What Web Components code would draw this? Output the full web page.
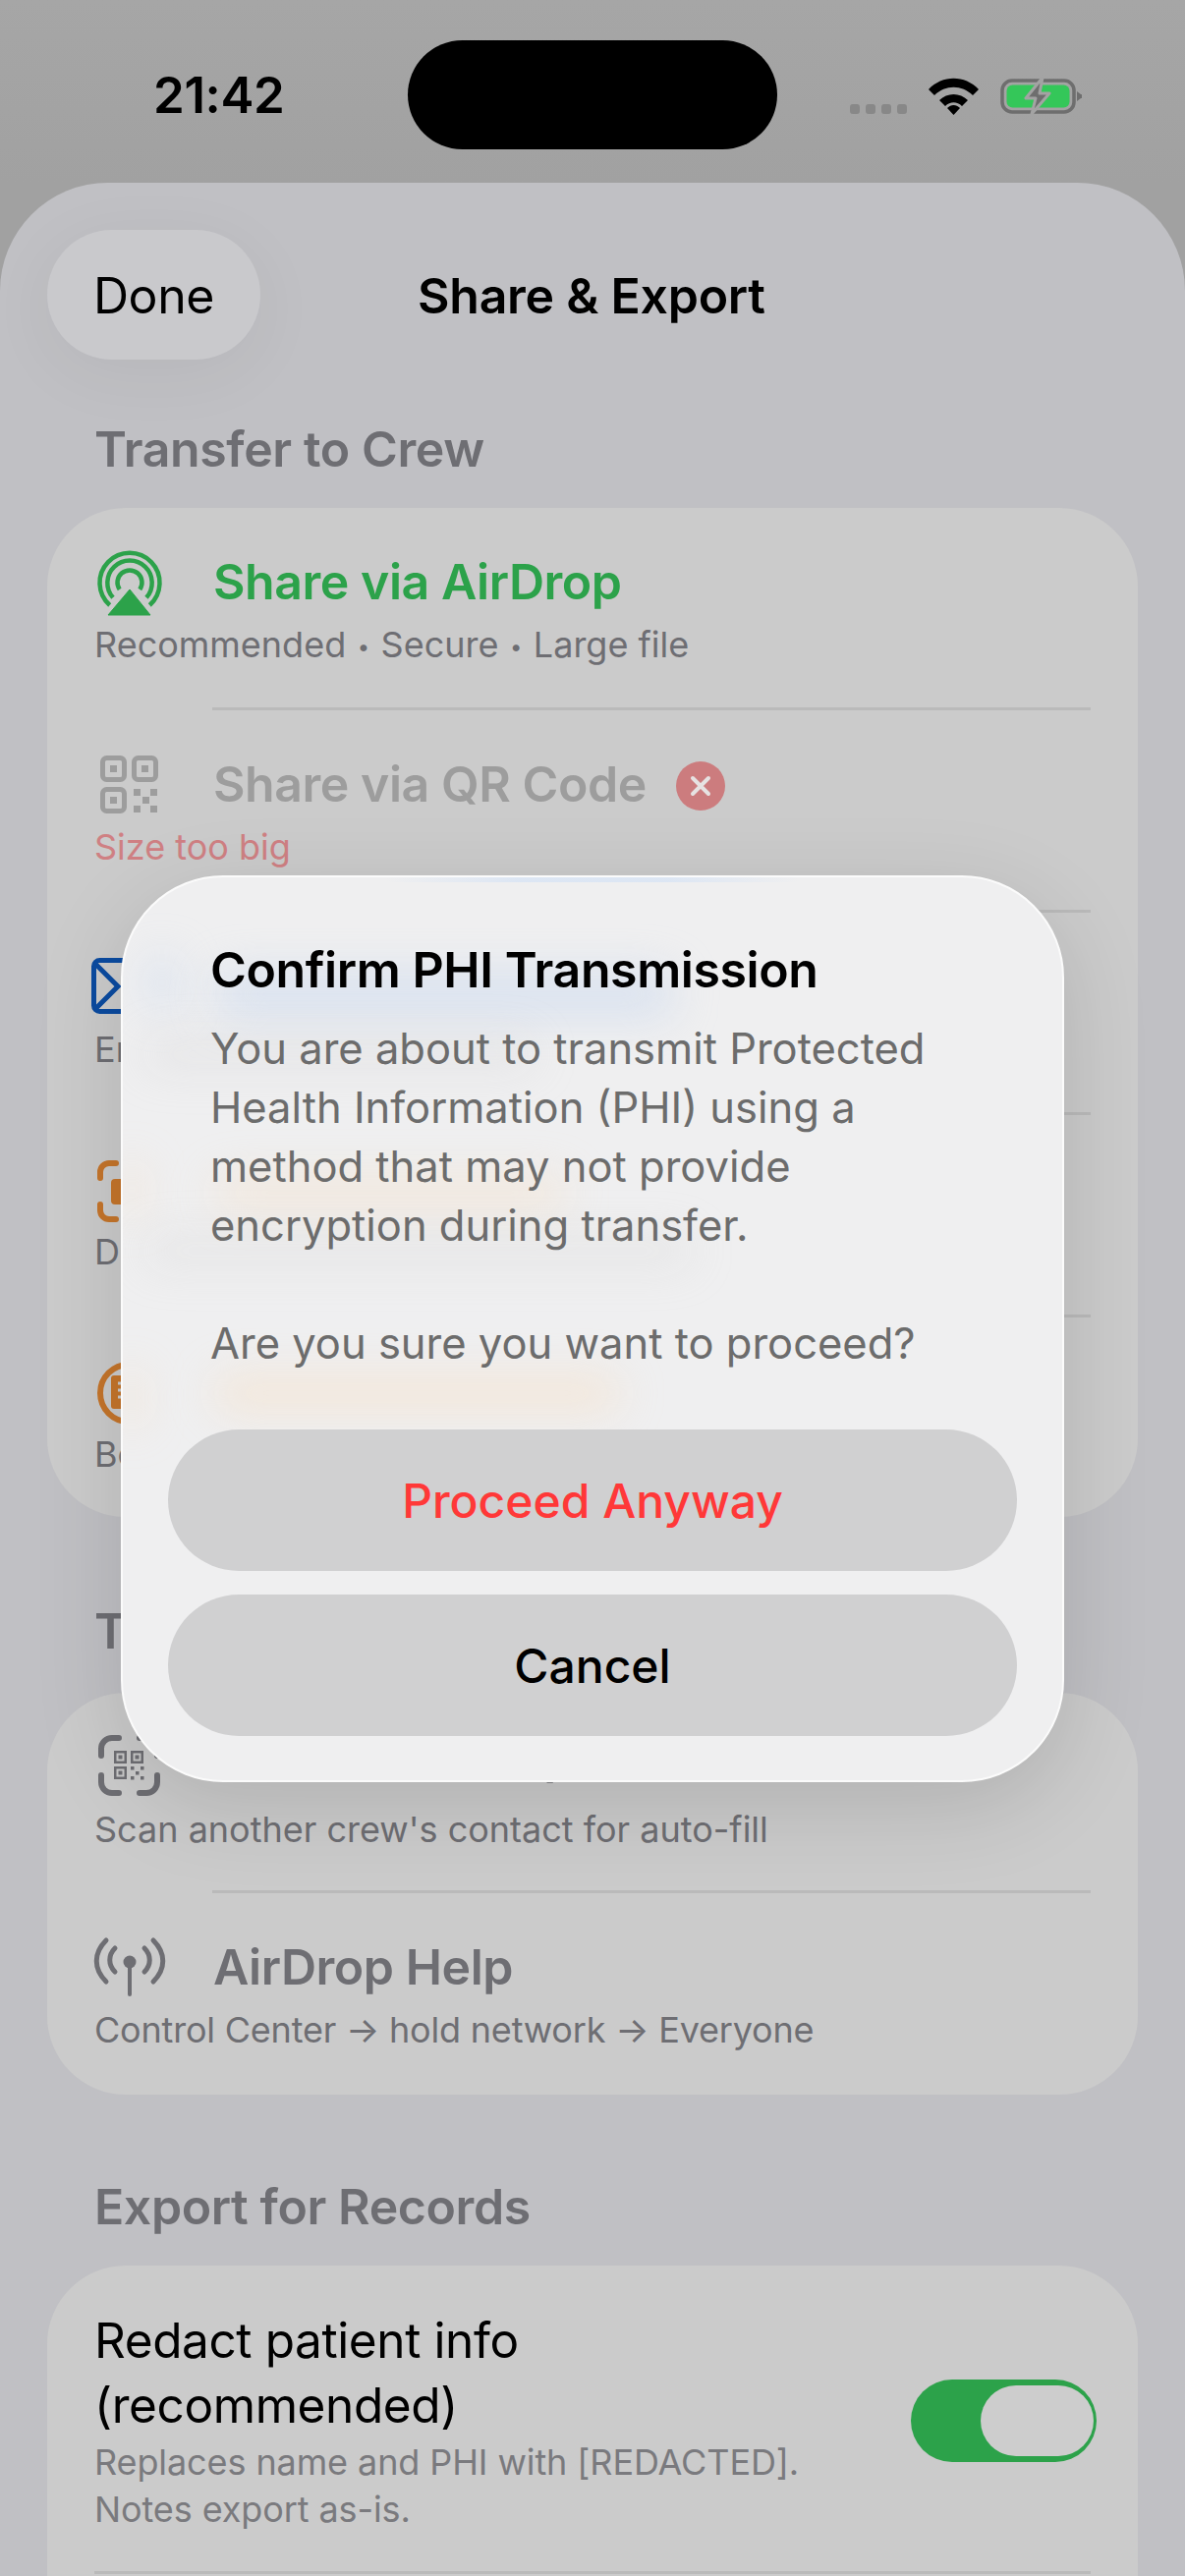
<!DOCTYPE html>
<html>
<head>
<meta charset="utf-8">
<title>Share &amp; Export</title>
<style>
  html, body { margin: 0; height: 100%; }
  body {
    width: 1206px;
    height: 2622px;
    overflow: hidden;
    position: relative;
    background: linear-gradient(#a6a6a6, #a1a1a1 186px);
    font-family: Inter, "Liberation Sans", sans-serif;
  }
</style>
</head>
<body>
  <status-bar></status-bar>

  <share-sheet heading="Share &amp; Export">
    <section-label>Transfer to Crew</section-label>
    <list-card>
      <share-row tone="green">
        <svg slot="icon" width="72" height="72" viewBox="0 0 72 72" fill="none" stroke="#2ca24a" stroke-width="4.5">
          <path d="M15.7 58A30.5 30.5 0 1 1 56.3 58"/>
          <path d="M19 50.3A22.7 22.7 0 1 1 53 50.3"/>
          <path d="M25.7 42A12.5 12.5 0 1 1 46.3 42"/>
          <path d="M36 42L57 68H14Z" fill="#2ca24a" stroke="#2ca24a" stroke-width="1" stroke-linejoin="round"/>
        </svg>
        <span slot="title">Share via AirDrop</span>
        <span slot="sub">Recommended<span style="font-size:22px;margin:0 11.5px;vertical-align:3px">•</span>Secure<span style="font-size:22px;margin:0 11.5px;vertical-align:3px">•</span>Large file</span>
      </share-row>
      <row-rule></row-rule>
      <share-row tone="off">
        <svg slot="icon" width="72" height="72" viewBox="0 0 72 72" fill="#9d9d9d">
          <g fill="none" stroke="#9d9d9d" stroke-width="5">
            <rect x="8.5" y="7.5" width="22" height="22" rx="4"/>
            <rect x="40.5" y="7.5" width="22" height="22" rx="4"/>
            <rect x="8.5" y="39.5" width="22" height="22" rx="4"/>
          </g>
          <rect x="16" y="15" width="7" height="7"/>
          <rect x="48" y="15" width="7" height="7"/>
          <rect x="16" y="47" width="7" height="7"/>
          <rect x="40" y="39" width="7" height="7"/>
          <rect x="57" y="39" width="7" height="7"/>
          <rect x="49" y="47" width="7" height="7"/>
          <rect x="40" y="56" width="7" height="7"/>
          <rect x="57" y="56" width="7" height="7"/>
        </svg>
        <span slot="title">Share via QR Code</span>
        <svg slot="badge" width="50" height="50" viewBox="0 0 50 50">
          <circle cx="25" cy="25" r="25" fill="#cc7c7e"/>
          <path d="M17 17L33 33M33 17L17 33" stroke="#e6e2e2" stroke-width="4" stroke-linecap="round"/>
        </svg>
        <span slot="sub" style="color:#cf8083">Size too big</span>
      </share-row>
      <row-rule></row-rule>
      <share-row>
        <svg slot="icon" width="72" height="72" viewBox="0 0 72 72" fill="none" stroke="#0b4ba0" stroke-width="5" style="overflow:visible">
          <rect x="-0.5" y="7.5" width="76" height="52" rx="6"/>
          <path d="M0 10L24 34L0 58M76 10L52 34L76 58"/>
        </svg>
        <span slot="sub">En</span>
      </share-row>
      <row-rule></row-rule>
      <share-row>
        <svg slot="icon" width="72" height="72" viewBox="0 0 72 72" fill="none" stroke="#c5752b" stroke-width="6" stroke-linecap="round" style="overflow:visible">
          <path d="M22 8H15A9 9 0 0 0 6 17V23M6 50V56A9 9 0 0 0 15 65H22M46 8H53A9 9 0 0 1 62 17V23M62 50V56A9 9 0 0 1 53 65H46"/>
          <rect x="17" y="24" width="34" height="26" rx="4" fill="#c5752b" stroke="none"/>
        </svg>
        <span slot="sub">D</span>
      </share-row>
      <row-rule></row-rule>
      <share-row>
        <svg slot="icon" width="72" height="72" viewBox="0 0 72 72" fill="none" stroke="#c5752b" stroke-width="6" style="overflow:visible">
          <circle cx="35" cy="36" r="29"/>
          <rect x="17" y="18" width="36" height="34" rx="3" fill="#c5752b" stroke="none"/>
          <path d="M24 26H46M24 33H46M24 40H46" stroke="#cbcbcb" stroke-width="3"/>
        </svg>
        <span slot="sub">Be</span>
      </share-row>
    </list-card>

    <section-label gap="86" under="33">T</section-label>
    <list-card>
      <share-row tone="muted" style="height:201px">
        <svg slot="icon" width="72" height="72" viewBox="0 0 72 72" fill="none" stroke="#6e6e73" stroke-width="6" stroke-linecap="round" style="overflow:visible">
          <path d="M25 5H18A11 11 0 0 0 7 16V23M7 43V50A11 11 0 0 0 18 61H25M46 61H53A11 11 0 0 0 64 50V43M64 23V16A11 11 0 0 0 53 5H46"/>
          <g fill="none" stroke-width="2.5" stroke-linecap="butt">
            <rect x="21.250" y="19.250" width="10.500" height="10.500"/>
            <rect x="38.250" y="19.250" width="10.500" height="10.500"/>
            <rect x="21.250" y="35.250" width="10.500" height="10.500"/>
          </g>
          <g fill="#6e6e73" stroke="none">
            <rect x="24.500" y="22.500" width="4" height="4"/>
            <rect x="41.500" y="22.500" width="4" height="4"/>
            <rect x="24.500" y="38.500" width="4" height="4"/>
            <rect x="37" y="34" width="3.500" height="3.500"/>
            <rect x="47" y="34" width="3.500" height="3.500"/>
            <rect x="42" y="39" width="3.500" height="3.500"/>
            <rect x="37" y="44" width="3.500" height="3.500"/>
            <rect x="47" y="44" width="3.500" height="3.500"/>
          </g>
        </svg>
        <span slot="title" style="margin-top:-8px">Scan Crew's QR</span>
        <span slot="sub">Scan another crew's contact for auto-fill</span>
      </share-row>
      <row-rule></row-rule>
      <share-row tone="muted" style="height:205px">
        <svg slot="icon" width="72" height="72" viewBox="0 0 72 72" fill="none" stroke="#6e6e73" stroke-width="5" stroke-linecap="round" style="overflow:visible">
          <circle cx="36" cy="29" r="6.500" fill="#6e6e73" stroke="none"/>
          <path d="M36 31V62" stroke-width="4"/>
          <path d="M21 15C14 22 14 32 21 39M51 15C58 22 58 32 51 39"/>
          <path d="M12 7C-1 20-1 36 12 49M60 7C73 20 73 36 60 49"/>
        </svg>
        <span slot="title">AirDrop Help</span>
        <span slot="sub" style="letter-spacing:-0.2px">Control Center → hold network → Everyone</span>
      </share-row>
    </list-card>

    <section-label gap="84" under="30">Export for Records</section-label>
    <list-card>
      <toggle-row>
        <span slot="title">Redact patient info<br>(recommended)</span>
        <span slot="sub">Replaces name and PHI with [REDACTED].<br>Notes export as-is.</span>
      </toggle-row>
      <row-rule full></row-rule>
      <share-row></share-row>
    </list-card>
  </share-sheet>

  <alert-dialog heading="Confirm PHI Transmission">
    <glass-haze slot="haze" tint="rgba(190,210,240,.45)" box="25 80 30 55"></glass-haze>
    <glass-haze slot="haze" tint="rgba(190,210,240,.45)" box="92 96 470 46"></glass-haze>
    <glass-haze slot="haze" tint="rgba(200,200,205,.25)" box="20 165 400 30"></glass-haze>
    <glass-haze slot="haze" tint="rgba(250,220,185,.45)" box="0 290 18 55"></glass-haze>
    <glass-haze slot="haze" tint="rgba(250,220,185,.4)" box="92 305 360 32"></glass-haze>
    <glass-haze slot="haze" tint="rgba(205,205,205,.25)" box="20 365 560 30"></glass-haze>
    <glass-haze slot="haze" tint="rgba(250,220,185,.45)" box="0 500 18 60"></glass-haze>
    <glass-haze slot="haze" tint="rgba(250,220,185,.45)" box="92 508 415 34"></glass-haze>
    You are about to transmit Protected<br>Health Information (PHI) using a<br>method that may not provide<br>encryption during transfer.<br><br>Are you sure you want to proceed?
    <alert-button slot="actions" tone="danger">Proceed Anyway</alert-button>
    <alert-button slot="actions">Cancel</alert-button>
  </alert-dialog>

<script>
class StatusBar extends HTMLElement {
  constructor() {
    super();
    this.attachShadow({ mode: "open" });
    this.shadowRoot.innerHTML = `
      <style>
        :host { display: flex; height: 186px; align-items: flex-start; box-sizing: border-box; padding-left: 156px; }
        .time { font: 600 51px/60px Inter, sans-serif; color: #000; margin-top: 67px; width: 259px; letter-spacing: -0.4px; }
        .island { width: 376px; height: 111px; margin-top: 41px; border-radius: 56px; background: #000; }
        .right { display: flex; align-items: flex-end; margin: 78px 0 0 74px; height: 39px; }
        .dots { display: flex; gap: 6px; margin-bottom: 1px; }
        .dots i { width: 10px; height: 10px; border-radius: 3px; background: #888; }
        .wifi { margin-left: 22px; }
        .battery { margin-left: 22px; }
      </style>
      <div class="time">21:42</div>
      <div class="island"></div>
      <div class="right">
        <div class="dots"><i></i><i></i><i></i><i></i></div>
        <svg class="wifi" width="51" height="38" viewBox="0 0 51 38" fill="#000">
          <path d="M0 12C14-3 37-3 51 12L45 18C34 7 17 7 6 18Z"/>
          <path d="M11 23C19 15 32 15 40 23L34 29C29 24 22 24 17 29Z"/>
          <path d="M19 31C23 27 28 27 32 31L25.500 38Z"/>
        </svg>
        <svg class="battery" width="83" height="39" viewBox="0 0 83 39">
          <rect x="2" y="4" width="73" height="32" rx="10" fill="none" stroke="#6e6e6e" stroke-width="3.500"/>
          <rect x="6.500" y="8.500" width="64" height="23" rx="6" fill="#34c759"/>
          <path d="M78 15L82 18A2 2 0 0 1 82 22L78 25Z" fill="#6e6e6e"/>
          <path d="M43 1L26 22H36L32 38L50 17H40Z" fill="#6e6e6e" stroke="#a3a3a3" stroke-width="3" stroke-linejoin="round"/>
        </svg>
      </div>`;
  }
}

class ShareSheet extends HTMLElement {
  constructor() {
    super();
    this.attachShadow({ mode: "open" });
    this.shadowRoot.innerHTML = `
      <style>
        :host { display: block; height: 2436px; box-sizing: border-box; padding: 48px 48px 0; overflow: hidden;
          background: #c0c0c4; border-radius: 110px 110px 0 0; }
        nav { display: flex; align-items: center; height: 132px; margin-bottom: 61px; }
        button { all: unset; width: 217px; height: 132px; border-radius: 66px; background: #c9c9cc; text-align: center;
          font: 400 50px/134px Inter, sans-serif; color: #000; letter-spacing: -0.4px;
          box-shadow: 0 14px 70px rgba(0,0,0,.05); }
        h1 { flex: 1; margin: 2px 0 0 160px; font: 600 50px/60px Inter, sans-serif; color: #000; letter-spacing: -0.25px; }
      </style>
      <nav><button>Done</button><h1></h1></nav>
      <slot></slot>`;
    this.shadowRoot.querySelector("h1").textContent = this.getAttribute("heading");
  }
}

class SectionLabel extends HTMLElement {
  constructor() {
    super();
    this.attachShadow({ mode: "open" });
    const gap = this.getAttribute("gap") || 0;
    const under = this.getAttribute("under") || 30;
    this.shadowRoot.innerHTML = `
      <style>
        :host { display: block; margin: ${gap}px 0 ${under}px 48px; font: 600 50px/60px Inter, sans-serif; color: #6e6e73; letter-spacing: -0.4px; }
      </style>
      <slot></slot>`;
  }
}

class ListCard extends HTMLElement {
  constructor() {
    super();
    this.attachShadow({ mode: "open" });
    this.shadowRoot.innerHTML = `
      <style>
        :host { display: block; background: #cbcbcb; border-radius: 80px; overflow: hidden; }
      </style>
      <slot></slot>`;
  }
}

class RowRule extends HTMLElement {
  constructor() {
    super();
    this.attachShadow({ mode: "open" });
    this.shadowRoot.innerHTML = `
      <style>
        :host { display: block; height: 3px; margin: 0 48px 0 168px; background: #bababa; }
        :host([full]) { margin: 0 48px; }
      </style>`;
  }
}

class ShareRow extends HTMLElement {
  constructor() {
    super();
    this.attachShadow({ mode: "open" });
    this.shadowRoot.innerHTML = `
      <style>
        :host { display: block; box-sizing: border-box; height: 203px; padding: 44px 48px 0; color: #000; }
        :host([tone="green"]) .title { color: #2ca24a; }
        :host([tone="off"]) .title { color: #9d9d9d; }
        :host([tone="muted"]) .title { color: #6e6e73; }
        .line { display: flex; align-items: center; height: 66px; }
        .icon { width: 121px; height: 72px; flex: none; margin: -3px 0; }
        .title { font: 600 50px/66px Inter, sans-serif; letter-spacing: -0.45px; display: flex; align-items: center; margin-top: -4px; }
        .badge { margin-left: 30px; display: flex; }
        .sub { margin-top: 5px; font: 400 36px/48px Inter, sans-serif; color: #6e6e73; display: flex; align-items: center; }
      </style>
      <div class="line">
        <div class="icon"><slot name="icon"></slot></div>
        <div class="title"><slot name="title"></slot></div>
        <div class="badge"><slot name="badge"></slot></div>
      </div>
      <div class="sub"><slot name="sub"></slot></div>`;
  }
}

class ToggleRow extends HTMLElement {
  constructor() {
    super();
    this.attachShadow({ mode: "open" });
    this.shadowRoot.innerHTML = `
      <style>
        :host { display: flex; align-items: center; justify-content: space-between; height: 311px; box-sizing: border-box;
          padding: 43px 42px 39px 48px; }
        .title { font: 400 49.5px/66px Inter, sans-serif; color: #000; letter-spacing: -0.4px; }
        .sub { font: 400 36px/48px Inter, sans-serif; color: #7a7a7e; margin-top: 1px; letter-spacing: -0.1px; }
        .switch { width: 189px; height: 84px; box-sizing: border-box; padding: 6px 3px; border-radius: 42px; background: #2ca24a;
          display: flex; justify-content: flex-end; }
        .switch i { width: 115px; height: 72px; border-radius: 36px; background: #cdcdcd; }
      </style>
      <div>
        <div class="title"><slot name="title"></slot></div>
        <div class="sub"><slot name="sub"></slot></div>
      </div>
      <div class="switch"><i></i></div>`;
  }
}

// a soft patch of colour in the dialog glass, where content shines through it
class GlassHaze extends HTMLElement {
  constructor() {
    super();
    this.attachShadow({ mode: "open" });
    const [left, top, wide, tall] = this.getAttribute("box").split(" ");
    this.shadowRoot.innerHTML = `
      <style>
        :host { position: absolute; left: ${left}px; top: ${top}px; width: ${wide}px; height: ${tall}px;
          background: ${this.getAttribute("tint")}; border-radius: 20px; filter: blur(22px); }
      </style>`;
  }
}

class AlertDialog extends HTMLElement {
  constructor() {
    super();
    this.attachShadow({ mode: "open" });
    this.shadowRoot.innerHTML = `
      <style>
        :host { position: absolute; left: 123px; top: 891px; width: 960px; height: 923px; box-sizing: border-box;
          padding: 62px 46px 0; border-radius: 104px; border: 2px solid #fbfbfb;
          background: linear-gradient(90deg, transparent 28%, rgba(208,224,246,.6) 42%, rgba(208,224,246,.6) 58%, transparent 72%) top / 100% 5px no-repeat, #efeff0;
          box-shadow: 0 24px 90px rgba(0,0,0,.13); }
        .glass { position: absolute; inset: 0; overflow: hidden; border-radius: inherit; }
        .content { position: relative; }
        h2 { margin: 0 0 0 43px; font: 600 50px/64px Inter, sans-serif; color: #000; letter-spacing: -0.4px; }
        .body { margin: 18px 0 0 43px; height: 360px; font: 400 43.5px/60px Inter, sans-serif; color: #6c6c6c; }
        .actions { display: flex; flex-direction: column; gap: 24px; margin-top: 58px; }
      </style>
      <div class="glass"><slot name="haze"></slot></div>
      <div class="content">
        <h2></h2>
        <div class="body"><slot></slot></div>
        <div class="actions"><slot name="actions"></slot></div>
      </div>`;
    this.shadowRoot.querySelector("h2").textContent = this.getAttribute("heading");
  }
}

class AlertButton extends HTMLElement {
  constructor() {
    super();
    this.attachShadow({ mode: "open" });
    this.shadowRoot.innerHTML = `
      <style>
        :host { display: flex; align-items: center; justify-content: center; height: 144px; box-sizing: border-box; padding-top: 2px;
          border-radius: 72px; background: #d0d0d1; font: 500 48px/60px Inter, sans-serif; color: #000; }
        :host([tone="danger"]) { color: #ff3838; }
      </style>
      <slot></slot>`;
  }
}

customElements.define("status-bar", StatusBar);
customElements.define("share-sheet", ShareSheet);
customElements.define("section-label", SectionLabel);
customElements.define("list-card", ListCard);
customElements.define("row-rule", RowRule);
customElements.define("share-row", ShareRow);
customElements.define("toggle-row", ToggleRow);
customElements.define("glass-haze", GlassHaze);
customElements.define("alert-dialog", AlertDialog);
customElements.define("alert-button", AlertButton);
</script>
</body>
</html>
